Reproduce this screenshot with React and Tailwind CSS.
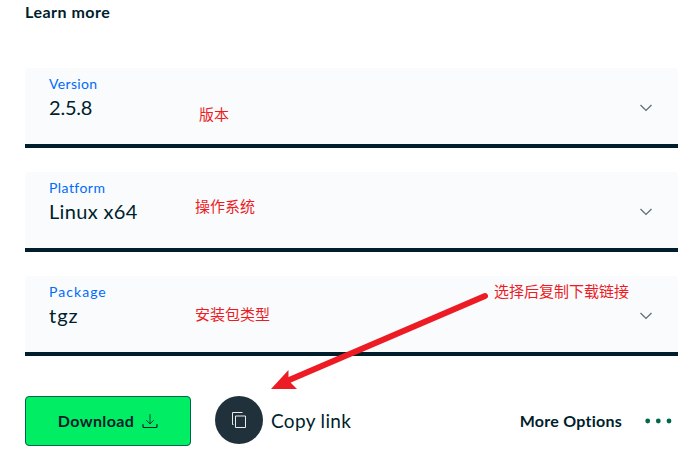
const fields = [
  { label: 'Version', value: '2.5.8', labelClass: 'tracking-[0.35px]', valueClass: 'tracking-[-0.2px]' },
  { label: 'Platform', value: 'Linux x64', labelClass: 'tracking-[0.45px]', valueClass: 'tracking-[0.35px]' },
  { label: 'Package', value: 'tgz', labelClass: 'tracking-[1.05px]', valueClass: 'tracking-[1px]' },
];

const notes = [
  { text: '版本', place: 'left-[199px] top-[104px]' },
  { text: '操作系统', place: 'left-[195px] top-[196px]' },
  { text: '安装包类型', place: 'left-[195px] top-[304px]' },
  { text: '选择后复制下载链接', place: 'left-[494px] top-[281px]' },
];

function Field({ label, value, labelClass, valueClass }) {
  return (
    <button className="flex h-20 w-full items-center justify-between rounded-t border-b-4 border-[#001e2b] bg-[#f9fbfd] pr-[26px] pl-6 text-left">
      <span className="flex h-full flex-col pt-[7px]">
        <span className={`text-[14px] leading-[18px] text-[#016bf8] ${labelClass}`}>{label}</span>
        <span className={`text-[20px] leading-[28px] ${valueClass}`}>{value}</span>
      </span>
      <svg className="mt-1 h-2 w-3" viewBox="0 0 12 8" fill="none" stroke="#5c6c75" strokeWidth="1.2">
        <path d="M0.5 1 L6 6.5 L11.500 1" />
      </svg>
    </button>
  );
}

export default function App() {
  return (
    <main className="relative h-[476px] w-[697px] overflow-hidden bg-white pr-[19px] pl-[25px] font-[Lato,'Noto_Sans_CJK_SC',sans-serif] text-[#001e2b]">
      <a className="block h-[68px] pt-[2px] text-[16px] leading-5 font-bold tracking-[0.5px]">Learn more</a>
      <div className="flex flex-col gap-6">
        {fields.map((f) => (
          <Field key={f.label} {...f} />
        ))}
      </div>
      <div className="mt-10 flex h-[50px] items-center">
        <button className="flex h-[50px] w-[166px] items-center justify-center gap-2 rounded border border-[#00684a] bg-[#00ed64] text-[16px] font-bold">
          <span className="tracking-[0.4px]">Download</span>
          <svg className="h-4 w-4" viewBox="0 0 16 16" fill="none" stroke="#001e2b" strokeLinecap="round" strokeLinejoin="round">
            <path d="M8 1.500V10.500M4.500 7.500L8 10.800L11.500 7.500" strokeWidth="0.800" />
            <path d="M1 11.500V13.500Q1 14.500 2 14.500H14Q15 14.500 15 13.500V11.500" strokeWidth="1.200" />
          </svg>
        </button>
        <button className="mb-[3px] ml-6 flex items-center gap-2">
          <span className="flex size-12 items-center justify-center rounded-full bg-[#21313c]">
            <svg className="size-4" viewBox="0 0 16 16" fill="none" stroke="#e8edeb">
              <path d="M4.500 4H14.500V15.500H4.500Z" />
              <path d="M2.500 12.500H1.500V0.500H11.500" />
            </svg>
          </span>
          <span className="mt-[2px] text-[19px] leading-6 tracking-[0.35px]">Copy link</span>
        </button>
        <span className="ml-auto text-[16px] font-bold tracking-[0.25px]">More Options</span>
        <svg className="mr-[6px] ml-[23px] h-[6px] w-[27px]" viewBox="0 0 27 6" fill="#00684a">
          <circle cx="2.700" cy="3" r="2.400" />
          <circle cx="13.300" cy="3" r="2.400" />
          <circle cx="24" cy="3" r="2.400" />
        </svg>
      </div>
      {notes.map((n) => (
        <span key={n.text} className={`absolute text-[15px] leading-5 whitespace-nowrap text-[#ed1c24] font-['Noto_Sans_CJK_SC',sans-serif] ${n.place}`}>
          {n.text}
        </span>
      ))}
      <svg className="pointer-events-none absolute inset-0 h-[476px] w-[697px]" viewBox="0 0 697 476">
        <path d="M485 296L288 380.500" stroke="#ed1c24" strokeWidth="6" strokeLinecap="round" />
        <path d="M271 389L288.500 370V379L291 383L297 389Z" fill="#ed1c24" />
      </svg>
    </main>
  );
}
